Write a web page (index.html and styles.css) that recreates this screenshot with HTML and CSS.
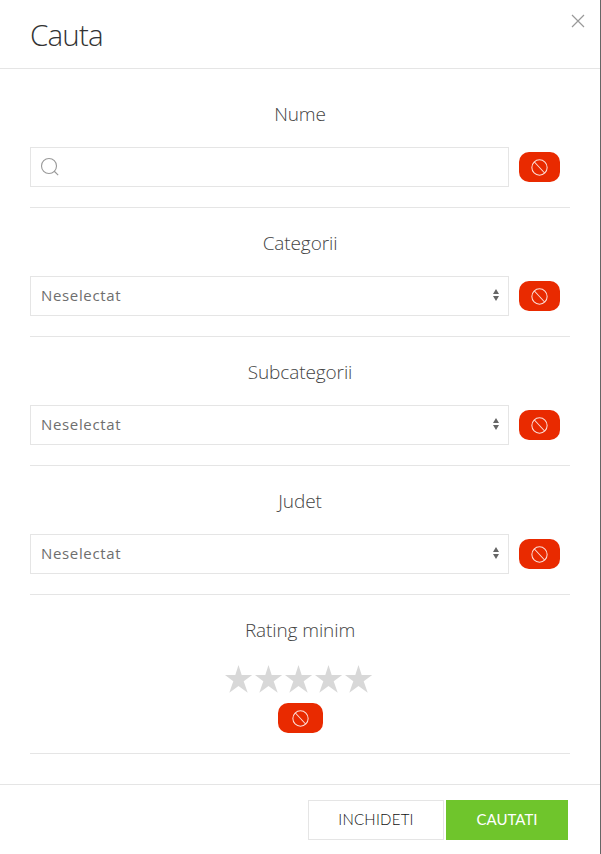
FILE: index.html
```html
<!DOCTYPE html>
<html lang="ro">
<head>
<meta charset="utf-8">
<title>Cauta</title>
<link rel="stylesheet" href="styles.css">
</head>
<body>
<svg class="defs" width="0" height="0">
  <symbol id="ban" viewBox="0 0 20 20"><circle cx="10" cy="10" r="9"/><path d="M4 3.5 16 16.5"/></symbol>
  <symbol id="arrows" viewBox="0 0 6 12"><path d="M0 5 3 0 6 5ZM0 7H6L3 12Z"/></symbol>
  <symbol id="star" viewBox="0 0 30 30"><path d="M13.5 1 16.7 11 27.2 11 18.7 17.2 22.7 28.8 13.5 22 4.3 28.8 8.3 17.2 0 11 10.3 11Z"/></symbol>
</svg>
<div class="modal">
  <header class="modal-header">
    <h2 class="title">Cauta</h2>
    <button class="close" type="button" aria-label="Inchideti"><svg width="14" height="14" viewBox="0 0 14 14"><path d="M1 1 13 13M13 1 1 13"/></svg></button>
  </header>
  <main class="modal-body">
    <section class="section">
      <h3 class="label">Nume</h3>
      <div class="row">
        <div class="field"><svg class="search" width="20" height="20" viewBox="0 0 20 20"><circle cx="9" cy="9" r="7.5"/><path d="M14 14 18.2 18.2"/></svg></div>
        <button class="reset" type="button"><svg class="ban"><use href="#ban"/></svg></button>
      </div>
    </section>
    <section class="section">
      <h3 class="label">Categorii</h3>
      <div class="row">
        <div class="field"><span class="value">Neselectat</span><svg class="arrows"><use href="#arrows"/></svg></div>
        <button class="reset" type="button"><svg class="ban"><use href="#ban"/></svg></button>
      </div>
    </section>
    <section class="section">
      <h3 class="label">Subcategorii</h3>
      <div class="row">
        <div class="field"><span class="value">Neselectat</span><svg class="arrows"><use href="#arrows"/></svg></div>
        <button class="reset" type="button"><svg class="ban"><use href="#ban"/></svg></button>
      </div>
    </section>
    <section class="section">
      <h3 class="label">Judet</h3>
      <div class="row">
        <div class="field"><span class="value">Neselectat</span><svg class="arrows"><use href="#arrows"/></svg></div>
        <button class="reset" type="button"><svg class="ban"><use href="#ban"/></svg></button>
      </div>
    </section>
    <section class="section">
      <h3 class="label">Rating minim</h3>
      <div class="rating">
        <div class="stars">
          <svg class="star"><use href="#star"/></svg><svg class="star"><use href="#star"/></svg><svg class="star"><use href="#star"/></svg><svg class="star"><use href="#star"/></svg><svg class="star"><use href="#star"/></svg>
        </div>
        <button class="reset reset-wide" type="button"><svg class="ban"><use href="#ban"/></svg></button>
      </div>
    </section>
  </main>
  <footer class="modal-footer">
    <button class="btn btn-default" type="button"><span>INCHIDETI</span></button>
    <button class="btn btn-primary" type="button"><span>CAUTATI</span></button>
  </footer>
</div>
</body>
</html>
```
FILE: styles.css
```css
* { box-sizing: border-box; }
body { margin: 0; background: #666; overflow: hidden; }
.defs { display: block; }
button { font: inherit; padding: 0; border: 0; background: none; }
svg { display: block; flex: none; }

.modal {
  display: flex;
  flex-direction: column;
  width: 600px;
  height: 854px;
  background: #fff;
}
.modal-header {
  display: flex;
  justify-content: space-between;
  align-items: flex-start;
  height: 69px;
  padding: 14px 15px 0 30px;
  border-bottom: 1px solid #e5e5e5;
}
.title {
  margin: 0;
  font: 300 29.5px/41px "Open Sans", sans-serif;
  letter-spacing: -0.8px;
  color: #333;
}
.close svg { fill: none; stroke: #999; stroke-width: 1.2; }

.modal-body { padding: 30px 30px 0; }
.section {
  padding-bottom: 20px;
  margin-bottom: 20px;
  border-bottom: 1px solid #e5e5e5;
}
.section:last-child { margin-bottom: 30px; }
.label {
  margin: 0 0 20px;
  font: 300 19px/30px "Open Sans", sans-serif;
  letter-spacing: -0.1px;
  height: 28px;
  text-align: center;
  color: #444;
}
.row { display: flex; align-items: center; gap: 10px; }
.field {
  display: flex;
  align-items: center;
  justify-content: space-between;
  width: 479px;
  height: 40px;
  padding: 0 9px 0 10px;
  border: 1px solid #e5e5e5;
}
.value {
  font: 400 15px/24px "Open Sans", sans-serif;
  letter-spacing: 0.65px;
  margin-bottom: 2px;
  color: #6e6e6e;
}
.search { fill: none; stroke: #999; stroke-width: 1.1; margin-left: -1px; }
.arrows { width: 6px; height: 12px; fill: #666; margin-bottom: 2px; }
.reset {
  display: flex;
  align-items: center;
  justify-content: center;
  width: 41px;
  height: 30px;
  padding: 0 1px 0 0;
  border-radius: 10px;
  background: #e92a00;
}
.reset-wide { width: 45px; margin-left: 1px; }
.ban { width: 17px; height: 17px; fill: none; stroke: #fff; stroke-opacity: .85; stroke-width: 1.2; }
.rating { display: flex; flex-direction: column; align-items: center; }
.stars { display: flex; height: 40px; }
.star { width: 30px; height: 30px; margin-top: 1px; fill: #d8d8d8; }

.modal-footer {
  display: flex;
  justify-content: flex-end;
  gap: 2px;
  height: 70px;
  padding: 15px 32px 15px 0;
  border-top: 1px solid #e5e5e5;
}
.btn {
  height: 40px;
  padding-bottom: 2px;
  font: 400 15px/36px Lato, sans-serif;
  text-align: center;
}
.btn-default { width: 136px; border: 1px solid #e5e5e5; font-weight: 300; letter-spacing: 0.25px; color: #111; }
.btn-primary { width: 122px; background: #6fc52c; color: #fff; }
```
